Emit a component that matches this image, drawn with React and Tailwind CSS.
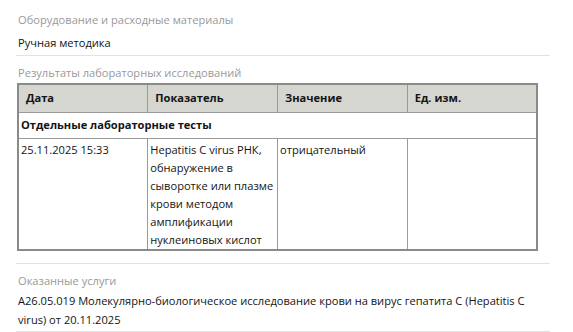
export default function App() {
  const th = "border border-[#9a9a9a] px-[7px] text-left font-bold h-[28px]";
  const td = "border border-[#9a9a9a] align-top px-[2px] pt-[2px] pb-0 font-normal";

  return (
    <div className="w-[573px] h-[332px] overflow-hidden bg-white font-['Open_Sans',sans-serif] text-[11.1px] text-[#141414]">
      <div className="pl-[16px] w-[550px]">
        {/* Equipment */}
        <section className="border-b border-[#e2e2e2] pt-[11px] pb-[3px]">
          <div className="pl-[2px] leading-[18px] text-[#999999]">Оборудование и расходные материалы</div>
          <div className="pl-[2px] mt-[5px] leading-[18px]">Ручная методика</div>
        </section>

        {/* Lab results */}
        <section className="border-b border-[#e2e2e2] pt-[8px] pb-[12px]">
          <div className="pl-[2px] leading-[18px] text-[#999999]">Результаты лабораторных исследований</div>
          <table className="mt-[1px] ml-[1px] w-[521px] table-fixed border-collapse border-2 border-[#8a8a8a] leading-[18px]">
            <thead>
              <tr className="bg-[#d6d6d1]">
                <th className={th}>Дата</th>
                <th className={th}>Показатель</th>
                <th className={th}>Значение</th>
                <th className={th}>Ед. изм.</th>
              </tr>
            </thead>
            <tbody>
              <tr>
                <td colSpan={4} className="border border-[#9a9a9a] px-[2px] h-[26px] font-bold">
                  Отдельные лабораторные тесты
                </td>
              </tr>
              <tr>
                <td className={td}>25.11.2025 15:33</td>
                <td className={td}>
                  Hepatitis C virus РНК, обнаружение в сыворотке или плазме крови методом амплификации нуклеиновых кислот
                </td>
                <td className={td}>отрицательный</td>
                <td className={td}></td>
              </tr>
            </tbody>
          </table>
        </section>

        {/* Services */}
        <section className="border-b border-[#e2e2e2] pt-[8px] pb-[2px]">
          <div className="pl-[2px] leading-[18px] text-[#999999]">Оказанные услуги</div>
          <div className="pl-[2px] mt-[1px] leading-[19px]">
            A26.05.019 Молекулярно-биологическое исследование крови на вирус гепатита С (Hepatitis C virus) от 20.11.2025
          </div>
        </section>
      </div>
    </div>
  );
}
